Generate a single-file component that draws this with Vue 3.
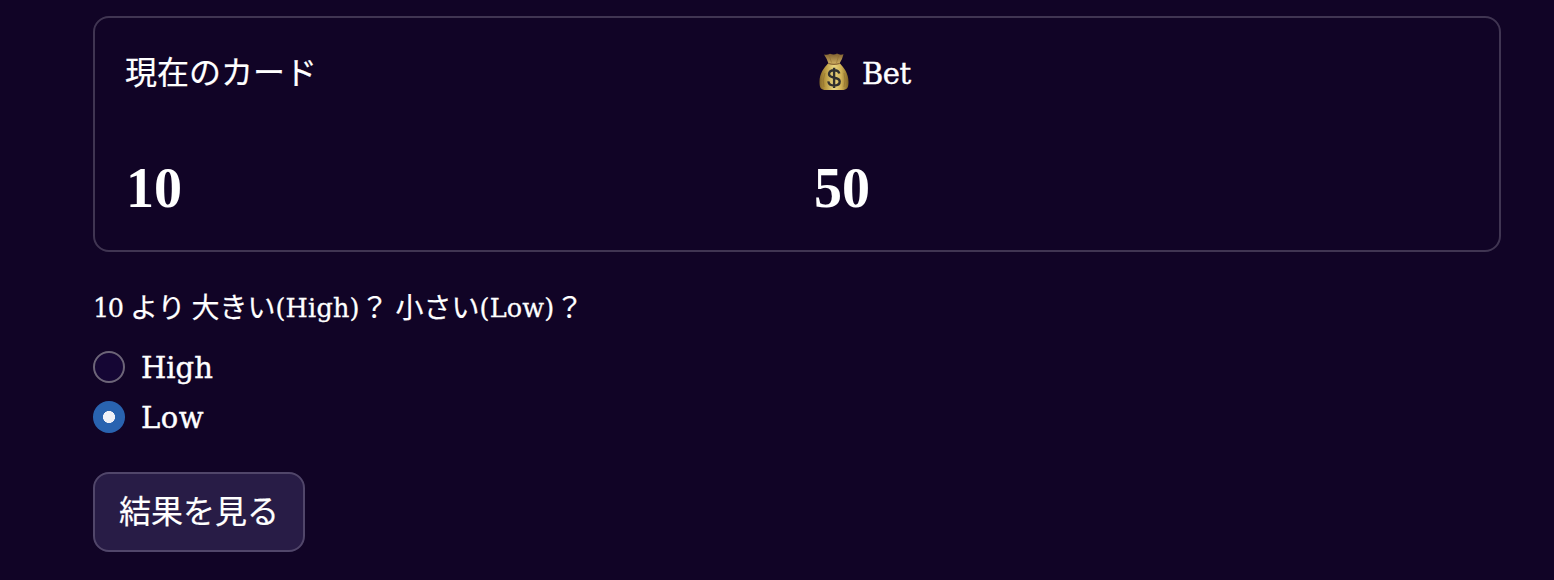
<script setup>
import { ref } from 'vue'

const choice = ref('Low')
const options = ['High', 'Low']
</script>

<template>
  <main class="page">
    <section class="panel">
      <div class="metric">
        <div class="label jp">現在のカード</div>
        <div class="value">10</div>
      </div>
      <div class="metric">
        <div class="label bet">
          <svg class="bag" width="32" height="38" viewBox="0 0 32 38" aria-hidden="true">
            <defs>
              <linearGradient id="gold" x1="0" x2="1" y1="0" y2="0">
                <stop offset="0" stop-color="#86682a" />
                <stop offset=".2" stop-color="#b8983f" />
                <stop offset=".5" stop-color="#ead681" />
                <stop offset=".75" stop-color="#d0b155" />
                <stop offset="1" stop-color="#806322" />
              </linearGradient>
              <linearGradient id="neck" x1="0" x2="0" y1="0" y2="1">
                <stop offset="0" stop-color="#80602f" />
                <stop offset="1" stop-color="#d0b062" />
              </linearGradient>
            </defs>
            <path d="M10 10.500C6 15 1.500 20 1.500 29C1.500 35 3 37 8 37H24C29 37 30.500 35 30.500 29C30.500 20 26 15 22 10.500Z" fill="url(#gold)" />
            <path d="M6 1.500Q9 2.500 12 .8Q16 2.500 19 .6Q22 2.500 25.500 1.300Q24.500 6 21.500 10.500Q16 12 10.500 10.500Q8.500 5 6 1.500Z" fill="url(#neck)" />
            <path d="M11.500 3.500l2 6M20.500 3l-2 7M7 20q-3 7-1 14M26 20q2 7 0 14" fill="none" stroke="#8a682a" stroke-width=".8" opacity=".6" />
            <path d="M10.500 10.500Q16 12.200 21.500 10.500" fill="none" stroke="#8a6634" stroke-width="1.200" />
            <path d="M21.300 20.500C20.800 18.300 18.800 17.200 16 17.200C13 17.200 11 18.700 11 21.100C11 26.500 21.700 23 21.700 28.600C21.700 31.200 19.200 32.600 16.200 32.600C13 32.600 10.800 31.100 10.300 28.400M16.100 14.800V35" fill="none" stroke="#30302f" stroke-width="2.400" />
          </svg>
          <span class="latin bet-word">Bet</span>
        </div>
        <div class="value">50</div>
      </div>
    </section>

    <p class="question">
      <span class="num">10</span><span class="jp yori">より</span><span class="jp">大きい</span><span class="paren paren-high">(High)</span><span class="jp mark">？</span><span class="jp">小さい</span><span class="paren paren-low">(Low)</span><span class="jp">？</span>
    </p>

    <div class="options" role="radiogroup">
      <label v-for="o in options" :key="o" class="option">
        <input v-model="choice" type="radio" name="guess" :value="o" />
        <span class="latin" :class="'word-' + o.toLowerCase()">{{ o }}</span>
      </label>
    </div>

    <button class="action" type="button">結果を見る</button>
  </main>
</template>

<style>
body {
  background: #110426;
}
</style>

<style scoped>
.page {
  box-sizing: border-box;
  height: 580px;
  padding: 16px 53px 0 93px;
  background: #110426;
  color: #fff;
  font-family: "Liberation Serif", "Noto Sans CJK JP", serif;
}
.panel {
  box-sizing: border-box;
  height: 236px;
  padding: 30px;
  border: 2px solid #403552;
  border-radius: 16px;
  display: grid;
  grid-template-columns: 1fr 1fr;
  gap: 32px;
}
.label {
  box-sizing: border-box;
  height: 50px;
  display: flex;
  align-items: center;
  font-size: 32px;
  line-height: 48px;
}
.jp {
  padding-bottom: 7px;
  font-family: "Noto Sans CJK JP", sans-serif;
  -webkit-text-stroke: 0.2px #fff;
}
.bet {
  padding-left: 5px;
}
.bag {
  margin-bottom: 3px;
}
.latin {
  padding-top: 2px;
  font-family: "DejaVu Serif", serif;
  font-size: 29px;
  line-height: 46px;
  -webkit-text-stroke: 0.4px #fff;
}
.bet-word {
  margin-left: 12px;
  letter-spacing: -0.500px;
}
.word-low {
  letter-spacing: 0.500px;
}
.value {
  margin-top: 54px;
  padding-left: 1px;
  font-weight: 700;
  font-size: 56px;
  line-height: 72px;
}
.question {
  height: 42px;
  margin: 35px 0 0;
  display: flex;
  align-items: center;
  font-size: 28px;
  line-height: 42px;
  white-space: nowrap;
}
.question .jp {
  padding-bottom: 4px;
}
.num,
.paren {
  font-family: "DejaVu Serif", serif;
  font-size: 25.500px;
  -webkit-text-stroke: 0.3px #fff;
}
.num {
  width: 37px;
  letter-spacing: -1.500px;
}
.yori {
  margin-right: 6px;
}
.paren-high {
  width: 85px;
  letter-spacing: 0.200px;
}
.paren-low {
  width: 76px;
  letter-spacing: 0.200px;
}
.question .mark {
  margin-right: 7px;
}
.options {
  margin-top: 14px;
  display: grid;
  gap: 2px;
}
.option {
  height: 48px;
  display: flex;
  align-items: center;
  gap: 16px;
}
.option input {
  appearance: none;
  box-sizing: border-box;
  width: 32px;
  height: 32px;
  margin: 0;
  border: 2px solid #6d6578;
  border-radius: 50%;
  background: #150634;
}
.option input:checked {
  border: 0;
  background: radial-gradient(circle, #f0f1f7 5.700px, #2963b0 6.300px);
}
.action {
  box-sizing: border-box;
  width: 212px;
  height: 80px;
  margin-top: 31px;
  padding: 0 0 6px;
  display: block;
  border: 2px solid #51466a;
  border-radius: 16px;
  background: #281c46;
  color: #fff;
  font: 32px/48px "Noto Sans CJK JP", sans-serif;
  -webkit-text-stroke: 0.2px #fff;
}
</style>
